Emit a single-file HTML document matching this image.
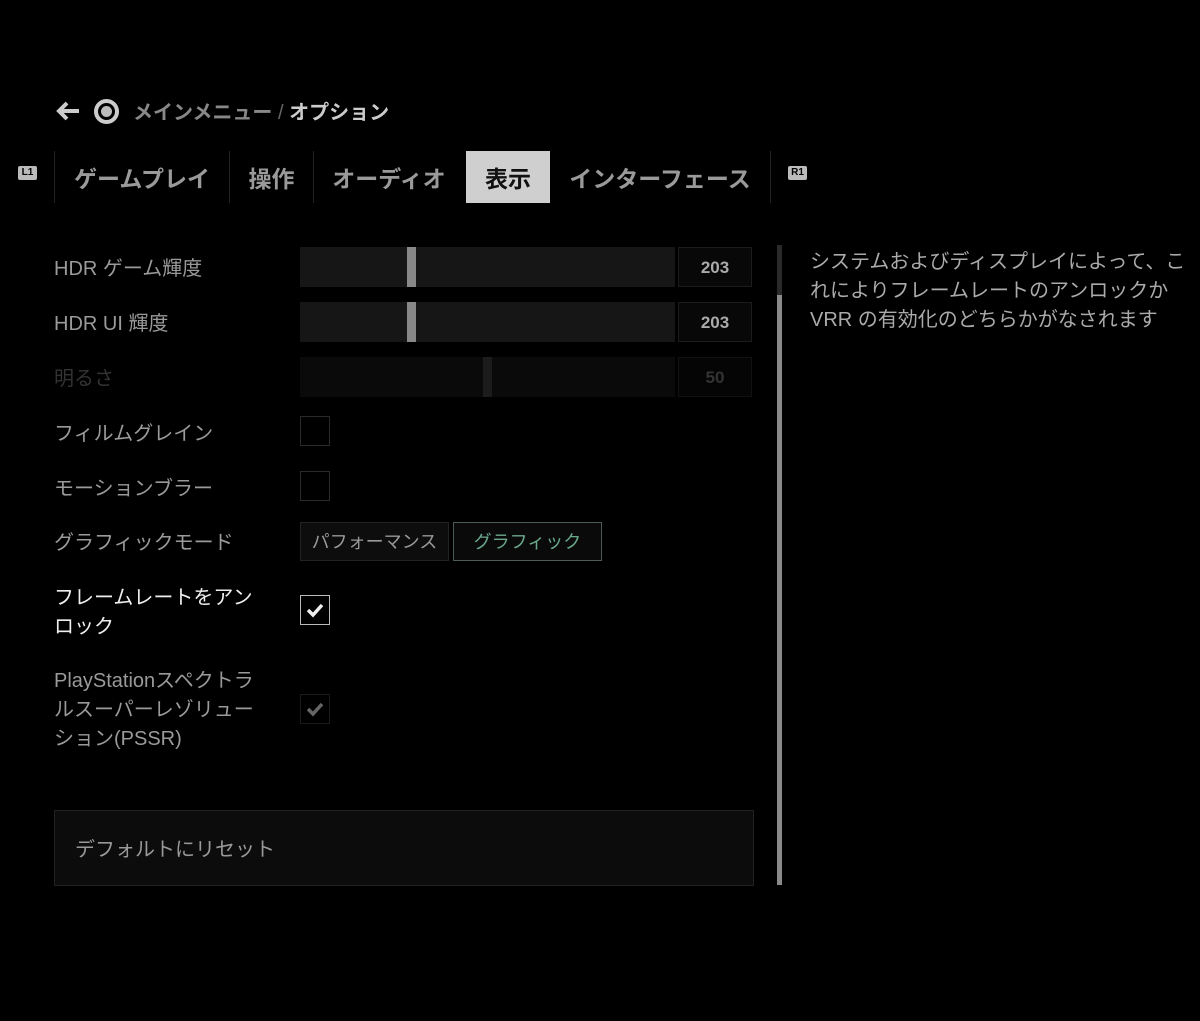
<!DOCTYPE html><html><head><meta charset="utf-8"><style>
*{margin:0;padding:0;box-sizing:border-box}
body{width:1200px;height:1021px;background:#000;font-family:"Liberation Sans","Noto Sans CJK JP",sans-serif;color:#999;position:relative;overflow:hidden}
.a{position:absolute}
.lbl{position:absolute;left:54px;font-size:20px;color:#9a9a9a;line-height:29px}
.tab{position:absolute;top:151px;height:52px;line-height:56px;font-size:23px;font-weight:bold;color:#9a9a9a;text-align:center}
.sep{position:absolute;top:151px;width:1px;height:52px;background:#222}
.track{position:absolute;left:300px;width:375px;height:40px;background:#161616}
.val{position:absolute;left:678px;width:74px;height:40px;background:#080808;border:1px solid #1c1c1c;text-align:center;line-height:40px;font-size:17px;font-weight:bold;color:#aaa}
.cb{position:absolute;left:300px;width:30px;height:30px;border:1px solid #2a2a2a}
.badge{position:absolute;top:166px;width:19px;height:14px;background:#bbb;color:#000;font-size:10px;font-weight:bold;line-height:14px;text-align:center;border-radius:2px}
</style></head><body>
<svg class="a" style="left:56px;top:100px" width="26" height="22" viewBox="0 0 26 22"><path d="M11 3L3 11L11 19M3 11H23" stroke="#ccc" stroke-width="4" fill="none"/></svg>
<div class="a" style="left:94px;top:99px;width:25px;height:25px;border-radius:50%;border:4px solid #ccc"><div style="margin:3px;width:11px;height:11px;border-radius:50%;background:#bbb"></div></div>
<div class="a" style="left:133px;top:99px;font-size:20px;font-weight:bold;line-height:29px;color:#888">メインメニュー <span style="font-weight:normal;color:#666">/</span> <span style="color:#ccc">オプション</span></div>
<div class="badge" style="left:18px">L1</div>
<div class="badge" style="left:788px">R1</div>
<div class="sep" style="left:54px"></div><div class="sep" style="left:229px"></div><div class="sep" style="left:313px"></div><div class="sep" style="left:770px"></div>
<div class="tab" style="left:55px;width:174px">ゲームプレイ</div>
<div class="tab" style="left:230px;width:83px">操作</div>
<div class="tab" style="left:314px;width:150px">オーディオ</div>
<div class="tab" style="left:466px;width:84px;background:#cfcfcf;color:#111">表示</div>
<div class="tab" style="left:552px;width:216px">インターフェース</div>

<div class="lbl" style="top:255px">HDR ゲーム輝度</div>
<div class="track" style="top:247px"></div><div class="a" style="left:407px;top:247px;width:9px;height:40px;background:#888"></div><div class="val" style="top:247px">203</div>
<div class="lbl" style="top:310px">HDR UI 輝度</div>
<div class="track" style="top:302px"></div><div class="a" style="left:407px;top:302px;width:9px;height:40px;background:#888"></div><div class="val" style="top:302px">203</div>
<div class="lbl" style="top:365px;color:#333">明るさ</div>
<div class="track" style="top:357px;background:#0a0a0a"></div><div class="a" style="left:483px;top:357px;width:9px;height:40px;background:#1c1c1c"></div><div class="val" style="top:357px;color:#333;border-color:#111;background:#050505">50</div>
<div class="lbl" style="top:420px">フィルムグレイン</div><div class="cb" style="top:416px"></div>
<div class="lbl" style="top:475px">モーションブラー</div><div class="cb" style="top:471px"></div>
<div class="lbl" style="top:529px">グラフィックモード</div>
<div class="a" style="left:300px;top:522px;width:149px;height:39px;background:#0d0d0d;border:1px solid #222;text-align:center;line-height:39px;font-size:18px;color:#999">パフォーマンス</div>
<div class="a" style="left:453px;top:522px;width:149px;height:39px;background:#0a0a0a;border:1px solid #4a5a58;text-align:center;line-height:39px;font-size:18px;color:#6aa88c">グラフィック</div>
<div class="lbl" style="top:584px;color:#eee">フレームレートをアン<br>ロック</div>
<div class="cb" style="top:595px;border-color:#bbb"><svg width="28" height="28" viewBox="0 0 28 28"><path d="M7 14L12 19L21 9" stroke="#eee" stroke-width="3.5" fill="none"/></svg></div>
<div class="lbl" style="top:667px">PlayStationスペクトラ<br>ルスーパーレゾリュー<br>ション(PSSR)</div>
<div class="cb" style="top:694px;border-color:#1a1a1a"><svg width="28" height="28" viewBox="0 0 28 28"><path d="M7 14L12 19L21 9" stroke="#666" stroke-width="3.5" fill="none"/></svg></div>
<div class="a" style="left:54px;top:810px;width:700px;height:76px;background:#0c0c0c;border:1px solid #222;padding-left:20px;line-height:78px;font-size:20px;color:#999">デフォルトにリセット</div>
<div class="a" style="left:777px;top:245px;width:5px;height:50px;background:#2a2a2a"></div>
<div class="a" style="left:777px;top:295px;width:5px;height:590px;background:#8a8a8a"></div>
<div class="a" style="left:810px;top:248px;font-size:20px;line-height:29px;color:#aaa;width:390px;white-space:nowrap">システムおよびディスプレイによって、こ<br>れによりフレームレートのアンロックか<br>VRR の有効化のどちらかがなされます</div>
</body></html>
